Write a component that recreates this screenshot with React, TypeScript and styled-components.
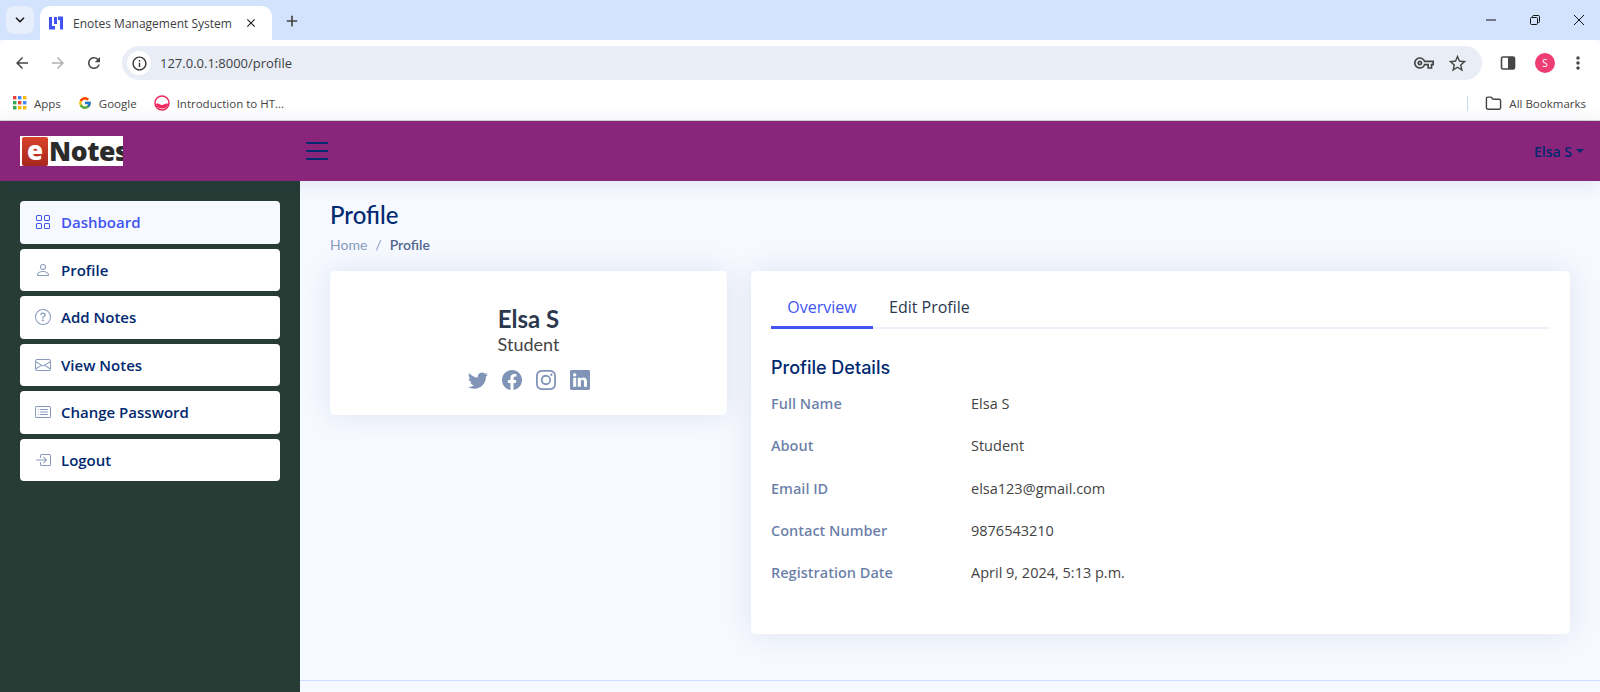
import React from 'react';
import styled, { createGlobalStyle } from 'styled-components';
import {
  BsBoxArrowInRight,
  BsCardList,
  BsEnvelope,
  BsFacebook,
  BsGrid,
  BsInstagram,
  BsLinkedin,
  BsList,
  BsPerson,
  BsQuestionCircle,
  BsTwitter,
} from 'react-icons/bs';
import { FcGoogle } from 'react-icons/fc';
import { MdArrowBack, MdArrowForward, MdClose, MdInfoOutline, MdMoreVert, MdOutlineVpnKey, MdRefresh, MdStarBorder } from 'react-icons/md';
import { LuChevronDown, LuFolder, LuPlus } from 'react-icons/lu';

const GlobalStyle = createGlobalStyle`
  html, body { margin: 0; padding: 0; background: #f6f9ff; }
  * { box-sizing: border-box; }
`;

const Root = styled.div`
  width: 1600px;
  height: 692px;
  overflow: hidden;
  display: flex;
  flex-direction: column;
  font-family: 'Open Sans', sans-serif;
  color: #444;
`;

const TabStrip = styled.div`
  height: 40px;
  flex: none;
  background: #d3e3fd;
  display: flex;
  align-items: flex-end;
  padding-left: 6px;
  position: relative;
`;

const TabSearch = styled.div`
  width: 28px;
  height: 28px;
  margin-bottom: 6px;
  border-radius: 8px;
  background: #e6eefc;
  display: flex;
  align-items: center;
  justify-content: center;
  color: #1f1f1f;
`;

const Tab = styled.div`
  width: 232px;
  height: 34px;
  margin-left: 6px;
  background: #fff;
  border-radius: 10px 10px 0 0;
  display: flex;
  align-items: center;
  padding: 0 14px 0 8px;
  gap: 9px;
  font-size: 12px;
  color: #3c4043;
`;

const TabTitle = styled.span`
  flex: 1;
  white-space: nowrap;
`;

const NewTab = styled.div`
  margin: 0 0 11px 12px;
  display: flex;
  color: #444;
`;

const WindowControls = styled.div`
  margin-left: auto;
  height: 40px;
  display: flex;
  align-items: center;
  gap: 32px;
  padding-right: 15px;
`;

const Toolbar = styled.div`
  height: 46px;
  flex: none;
  background: #fff;
  display: flex;
  align-items: center;
  border-radius: 8px 8px 0 0;
  padding-left: 13px;
`;

const NavButton = styled.div<{ $muted?: boolean }>`
  width: 18px;
  height: 18px;
  margin-right: 18px;
  display: flex;
  color: ${(p) => (p.$muted ? '#b0b0b0' : '#444746')};
`;

const AddressBar = styled.div`
  width: 1360px;
  height: 34px;
  margin-left: 1px;
  background: #e9edf6;
  border-radius: 17px;
  display: flex;
  align-items: center;
  padding: 0 14px 0 5px;
  font-size: 13px;
  color: #3b3f44;
`;

const InfoChip = styled.div`
  width: 24px;
  height: 24px;
  border-radius: 50%;
  background: #fff;
  display: flex;
  align-items: center;
  justify-content: center;
  margin-right: 9px;
  color: #333;
`;

const Url = styled.span`
  flex: 1;
`;

const BarIcon = styled.div`
  display: flex;
  margin-left: 13px;
  color: #444746;
`;

const ToolbarRight = styled.div`
  flex: 1;
  display: flex;
  align-items: center;
  padding-left: 18px;
`;

const Avatar = styled.div`
  width: 20px;
  height: 20px;
  border-radius: 50%;
  margin-left: 19px;
  background: #ee3d73;
  color: #fff;
  font-size: 10px;
  display: flex;
  align-items: center;
  justify-content: center;
`;

const BookmarksBar = styled.div`
  height: 35px;
  flex: none;
  background: #fff;
  border-bottom: 1px solid #d5d9d9;
  display: flex;
  align-items: center;
  padding: 0 14px 0 13px;
  font-size: 11.5px;
  color: #444;
`;

const Bookmark = styled.div<{ $gap?: number }>`
  display: flex;
  align-items: center;
  gap: 7px;
  margin-right: ${(p) => p.$gap ?? 17}px;
  white-space: nowrap;
`;

const BookmarkDivider = styled.div`
  width: 1px;
  height: 15px;
  background: #c7d9f5;
  margin-left: auto;
  margin-right: 17px;
`;

const Header = styled.header`
  height: 60px;
  flex: none;
  background: #89267b;
  display: flex;
  align-items: center;
  color: #012970;
  box-shadow: 0 2px 20px rgba(1, 41, 112, 0.1);
  z-index: 2;
`;

const LogoBox = styled.div`
  width: 103px;
  height: 30px;
  margin-left: 20px;
  background: #fff;
  display: flex;
  align-items: center;
  overflow: hidden;
`;

const LogoMark = styled.div`
  width: 26px;
  height: 29px;
  flex: none;
  margin-left: 2px;
  background: linear-gradient(#d8432b, #a8261e);
  border-radius: 2px;
  color: #fff;
  font-size: 26px;
  line-height: 26px;
  font-weight: 800;
  text-align: center;
  font-family: 'Open Sans', sans-serif;
`;

const LogoText = styled.span`
  font-family: 'Open Sans', sans-serif;
  font-size: 26.5px;
  line-height: 30px;
  font-weight: 800;
  letter-spacing: -0.4px;
  color: #2b2b2b;
  margin-left: 1px;
`;

const Burger = styled.div`
  display: flex;
  margin-left: 178px;
  width: 32px;
  height: 32px;
  color: #012970;
`;

const UserMenu = styled.div`
  margin-left: auto;
  margin-right: 16px;
  display: flex;
  align-items: center;
  gap: 4px;
  font-size: 14px;
  font-weight: 600;
`;

const Caret = styled.span`
  width: 0;
  height: 0;
  border-left: 4px solid transparent;
  border-right: 4px solid transparent;
  border-top: 4px solid #012970;
`;

const Body = styled.div`
  flex: 1;
  display: flex;
  min-height: 0;
`;

const Sidebar = styled.aside`
  width: 300px;
  flex: none;
  background: #263c34;
  padding: 20px;
  display: flex;
  flex-direction: column;
  gap: 5px;
`;

const NavItem = styled.div<{ $active?: boolean }>`
  display: flex;
  align-items: center;
  height: 42.5px;
  padding: 0 15px;
  border-radius: 4px;
  font-size: 15px;
  font-weight: 600;
  background: ${(p) => (p.$active ? '#f6f9ff' : '#fff')};
  color: ${(p) => (p.$active ? '#4154f1' : '#012970')};
`;

const NavIcon = styled.span<{ $active?: boolean }>`
  display: flex;
  width: 16px;
  margin-right: 10px;
  justify-content: center;
  color: ${(p) => (p.$active ? '#4154f1' : '#899bbd')};
`;

const Main = styled.main`
  flex: 1;
  min-width: 0;
  display: flex;
  flex-direction: column;
`;

const Content = styled.div`
  flex: 1;
  padding: 20px 30px 0;
`;

const PageTitle = styled.h1`
  margin: 0;
  font-family: 'Lato', sans-serif;
  font-size: 24px;
  line-height: 28.8px;
  font-weight: 500;
  color: #012970;
`;

const Breadcrumb = styled.div`
  display: flex;
  gap: 8px;
  margin-top: 4px;
  font-family: 'Lato', sans-serif;
  font-size: 14px;
  line-height: 21px;
  color: #899bbd;
`;

const BreadcrumbActive = styled.span`
  color: #51678f;
  font-weight: 600;
`;

const Columns = styled.div`
  display: grid;
  grid-template-columns: 397px 819px;
  gap: 24px;
  margin-top: 16px;
  align-items: start;
`;

const Card = styled.section`
  background: #fff;
  border-radius: 5px;
  box-shadow: 0 0 30px rgba(1, 41, 112, 0.1);
`;

const ProfileCard = styled(Card)`
  height: 144px;
  display: flex;
  flex-direction: column;
  align-items: center;
  padding-top: 34px;
`;

const Name = styled.h2`
  margin: 0;
  font-family: 'Lato', sans-serif;
  font-size: 24px;
  line-height: 28px;
  font-weight: 700;
  color: #2c384e;
`;

const Role = styled.h3`
  margin: 0;
  font-family: 'Lato', sans-serif;
  font-size: 18px;
  line-height: 22px;
  font-weight: 400;
  color: #444;
`;

const Socials = styled.div`
  display: flex;
  gap: 14px;
  margin-top: 15px;
  color: rgba(1, 41, 112, 0.5);
`;

const DetailCard = styled(Card)`
  height: 363px;
  padding: 20px;
`;

const Tabs = styled.div`
  display: flex;
  border-bottom: 2px solid #eef0fb;
  height: 38px;
`;

const TabLink = styled.div<{ $active?: boolean }>`
  padding: 0 16px;
  height: 38px;
  font-size: 16px;
  line-height: 32px;
  color: ${(p) => (p.$active ? '#4154f1' : '#2c384e')};
  border-bottom: 3px solid ${(p) => (p.$active ? '#4154f1' : 'transparent')};
  width: ${(p) => (p.$active ? '102px' : 'auto')};
  text-align: center;
`;

const SectionTitle = styled.h5`
  margin: 26px 0 0;
  font-family: 'Inter', sans-serif;
  font-size: 18px;
  line-height: 26px;
  font-weight: 500;
  color: #012970;
`;

const Rows = styled.div`
  display: flex;
  flex-direction: column;
  margin-top: 11px;
`;

const Row = styled.div`
  display: grid;
  grid-template-columns: 200px 1fr;
  height: 42.4px;
  font-size: 14.5px;
  line-height: 24px;
`;

const Label = styled.div`
  font-weight: 600;
  color: rgba(1, 41, 112, 0.6);
`;

const Value = styled.div`
  color: #444;
`;

const Footer = styled.footer`
  height: 12px;
  flex: none;
  border-top: 1px solid #cddfff;
`;

const nav = [
  { label: 'Dashboard', icon: <BsGrid size={16} />, active: true },
  { label: 'Profile', icon: <BsPerson size={16} /> },
  { label: 'Add Notes', icon: <BsQuestionCircle size={16} /> },
  { label: 'View Notes', icon: <BsEnvelope size={16} /> },
  { label: 'Change Password', icon: <BsCardList size={16} /> },
  { label: 'Logout', icon: <BsBoxArrowInRight size={16} /> },
];

const details = [
  ['Full Name', 'Elsa S'],
  ['About', 'Student'],
  ['Email ID', 'elsa123@gmail.com'],
  ['Contact Number', '9876543210'],
  ['Registration Date', 'April 9, 2024, 5:13 p.m.'],
];

const appColors = ['#ea4335', '#4285f4', '#fbbc04', '#34a853', '#ea4335', '#4285f4', '#34a853', '#fbbc04', '#fbbc04'];

const AppsIcon = () => (
  <svg width="14" height="14" viewBox="0 0 14 14">
    {appColors.map((c, i) => (
      <rect key={i} x={(i % 3) * 5} y={Math.floor(i / 3) * 5} width="3.4" height="3.4" fill={c} />
    ))}
  </svg>
);

const Favicon = () => (
  <svg width="16" height="16" viewBox="0 0 16 16">
    <path d="M1 2h3v9h3v3.500H1z M6 2h3v7H6z M10 1.500h5v13h-3V5h-2z" fill="#4154f1" />
  </svg>
);

const HtmlFavicon = () => (
  <svg width="16" height="16" viewBox="0 0 16 16">
    <circle cx="8" cy="8" r="7" fill="#fff" stroke="#f0295f" strokeWidth="1.500" />
    <path d="M1.800 9c2.500-1.500 4 1 6.200 1s3.700-2.500 6.200-1a6.500 6.500 0 0 1-12.400 0z" fill="#f0295f" />
  </svg>
);

const SidePanelIcon = () => (
  <svg width="16" height="16" viewBox="0 0 16 16">
    <rect x="1.500" y="2" width="13" height="12" rx="1.500" fill="none" stroke="#444746" strokeWidth="1.600" />
    <rect x="8" y="2" width="6.500" height="12" fill="#444746" />
  </svg>
);

const Minimize = () => (
  <svg width="12" height="12" viewBox="0 0 12 12">
    <path d="M1 6h10" stroke="#111" strokeWidth="1" />
  </svg>
);

const Restore = () => (
  <svg width="12" height="12" viewBox="0 0 12 12" fill="none" stroke="#111">
    <rect x="1.500" y="3.500" width="7" height="7" rx="1" />
    <path d="M3.500 3.500V2.500a1 1 0 0 1 1-1h5a1 1 0 0 1 1 1v5a1 1 0 0 1-1 1h-1" />
  </svg>
);

const WindowClose = () => (
  <svg width="12" height="12" viewBox="0 0 12 12">
    <path d="M1 1l10 10M11 1L1 11" stroke="#111" strokeWidth="1" />
  </svg>
);

const App = () => (
  <Root>
    <GlobalStyle />
    <TabStrip>
      <TabSearch>
        <LuChevronDown size={14} strokeWidth={3} />
      </TabSearch>
      <Tab>
        <Favicon />
        <TabTitle>Enotes Management System</TabTitle>
        <MdClose size={14} color="#222" />
      </Tab>
      <NewTab>
        <LuPlus size={16} strokeWidth={2.5} />
      </NewTab>
      <WindowControls>
        <Minimize />
        <Restore />
        <WindowClose />
      </WindowControls>
    </TabStrip>
    <Toolbar>
      <NavButton>
        <MdArrowBack size={18} />
      </NavButton>
      <NavButton $muted>
        <MdArrowForward size={18} />
      </NavButton>
      <NavButton>
        <MdRefresh size={18} />
      </NavButton>
      <AddressBar>
        <InfoChip>
          <MdInfoOutline size={17} />
        </InfoChip>
        <Url>127.0.0.1:8000/profile</Url>
        <MdOutlineVpnKey size={20} color="#444746" />
        <BarIcon>
          <MdStarBorder size={21} />
        </BarIcon>
      </AddressBar>
      <ToolbarRight>
        <SidePanelIcon />
        <Avatar>S</Avatar>
        <BarIcon>
          <MdMoreVert size={20} />
        </BarIcon>
      </ToolbarRight>
    </Toolbar>
    <BookmarksBar>
      <Bookmark>
        <AppsIcon />
        Apps
      </Bookmark>
      <Bookmark>
        <FcGoogle size={14} />
        Google
      </Bookmark>
      <Bookmark>
        <HtmlFavicon />
        Introduction to HT...
      </Bookmark>
      <BookmarkDivider />
      <Bookmark $gap={0}>
        <LuFolder size={17} />
        All Bookmarks
      </Bookmark>
    </BookmarksBar>
    <Header>
      <LogoBox>
        <LogoMark>e</LogoMark>
        <LogoText>Notes</LogoText>
      </LogoBox>
      <Burger>
        <BsList size={32} />
      </Burger>
      <UserMenu>
        Elsa S
        <Caret />
      </UserMenu>
    </Header>
    <Body>
      <Sidebar>
        {nav.map((item) => (
          <NavItem key={item.label} $active={item.active}>
            <NavIcon $active={item.active}>{item.icon}</NavIcon>
            {item.label}
          </NavItem>
        ))}
      </Sidebar>
      <Main>
        <Content>
          <PageTitle>Profile</PageTitle>
          <Breadcrumb>
            <span>Home</span>
            <span>/</span>
            <BreadcrumbActive>Profile</BreadcrumbActive>
          </Breadcrumb>
          <Columns>
            <ProfileCard>
              <Name>Elsa S</Name>
              <Role>Student</Role>
              <Socials>
                <BsTwitter size={20} />
                <BsFacebook size={20} />
                <BsInstagram size={20} />
                <BsLinkedin size={20} />
              </Socials>
            </ProfileCard>
            <DetailCard>
              <Tabs>
                <TabLink $active>Overview</TabLink>
                <TabLink>Edit Profile</TabLink>
              </Tabs>
              <SectionTitle>Profile Details</SectionTitle>
              <Rows>
                {details.map(([label, value]) => (
                  <Row key={label}>
                    <Label>{label}</Label>
                    <Value>{value}</Value>
                  </Row>
                ))}
              </Rows>
            </DetailCard>
          </Columns>
        </Content>
        <Footer />
      </Main>
    </Body>
  </Root>
);

export default App;
